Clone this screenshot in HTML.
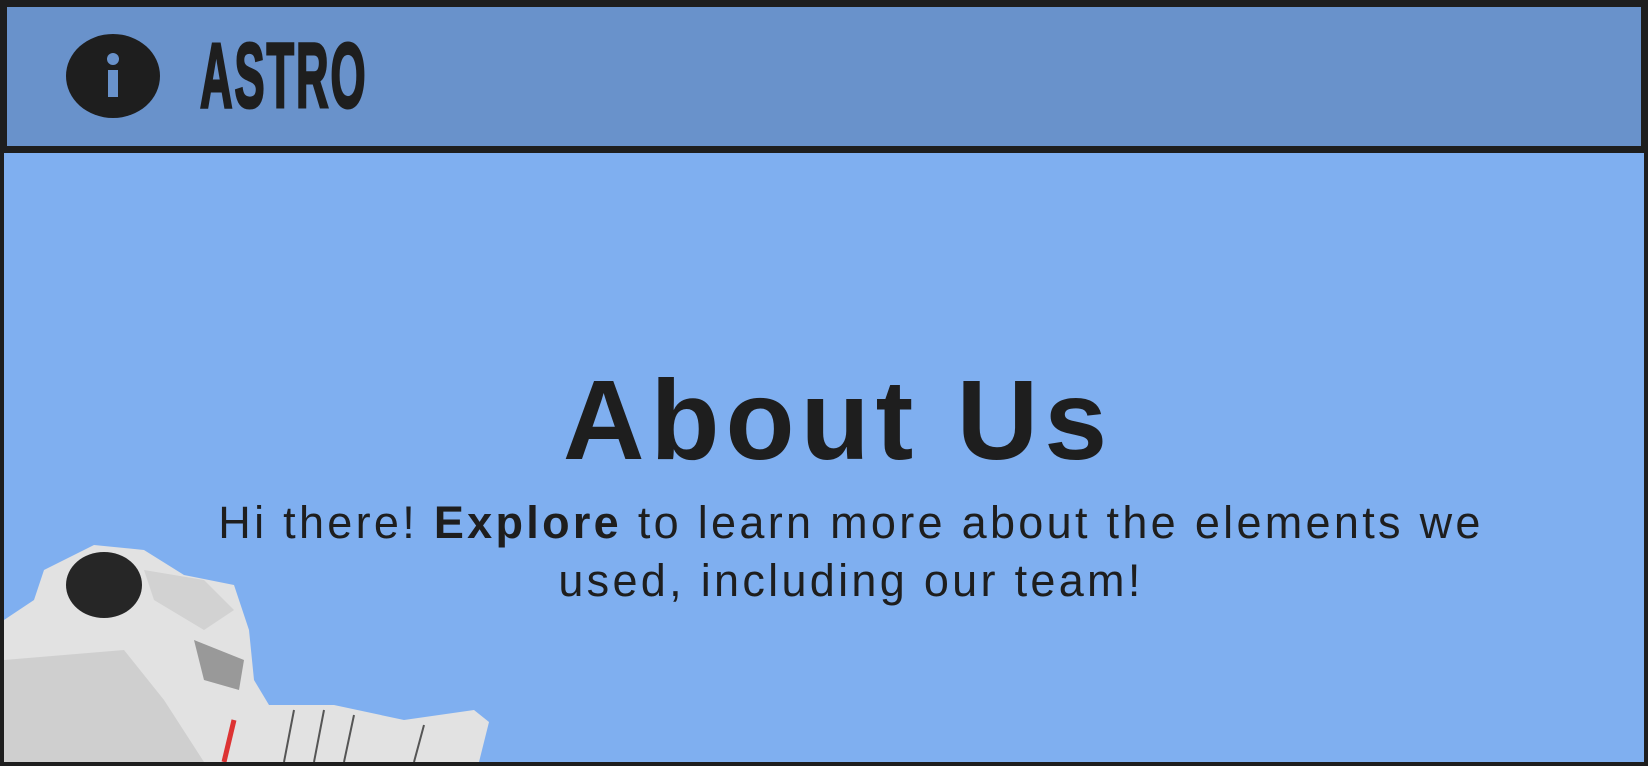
<!DOCTYPE html>
<html><head><meta charset="utf-8"><style>
*{margin:0;padding:0;box-sizing:border-box}
body{width:1648px;height:766px;background:#1e1e1e;position:relative;overflow:hidden;font-family:"Liberation Sans",sans-serif;color:#1e1e1e}
.hdr{position:absolute;left:7px;top:7px;width:1634px;height:139px;background:#6992cb}
.main{position:absolute;left:4px;top:153px;width:1640px;height:609px;background:#7faff0}
.logo{position:absolute;left:200px;top:30px;font-size:92px;font-weight:bold;transform:scaleX(0.49);transform-origin:0 0;line-height:1;letter-spacing:4px;-webkit-text-stroke:3px #1e1e1e}
h1{position:absolute;left:14px;width:1648px;top:364px;text-align:center;font-size:113px;font-weight:bold;letter-spacing:6px;line-height:1}
p{position:absolute;left:27px;width:1648px;top:494px;text-align:center;font-size:45px;line-height:58px;letter-spacing:3.3px}
</style></head><body>
<div class="hdr"></div>
<div class="main"></div>
<svg style="position:absolute;left:0;top:0" width="200" height="160">
<ellipse cx="113" cy="76" rx="47" ry="42" fill="#1e1e1e"/>
<circle cx="113" cy="59" r="6" fill="#6992cb"/>
<rect x="108" y="70" width="10" height="27" fill="#6992cb"/>
</svg>
<div class="logo">ASTRO</div>
<h1>About Us</h1>
<p>Hi there! <b>Explore</b> to learn more about the elements we<br>used, including our team!</p>
<svg style="position:absolute;left:4px;top:540px" width="490" height="222">
<path d="M0 80 L30 60 L40 30 L90 5 L140 10 L180 35 L230 45 L245 90 L250 140 L265 165 L330 165 L400 180 L470 170 L485 182 L475 222 L0 222 Z" fill="#e2e2e2"/>
<ellipse cx="100" cy="45" rx="38" ry="33" fill="#262626"/>
<path d="M140 30 L200 40 L230 70 L200 90 L150 60Z" fill="#d2d2d2"/>
<path d="M0 120 L120 110 L160 160 L200 222 L0 222Z" fill="#cfcfcf"/>
<path d="M230 180 L220 222" stroke="#d33" stroke-width="5"/>
<path d="M290 170 L280 222 M320 170 L310 222 M350 175 L340 222 M420 185 L410 222" stroke="#555" stroke-width="2"/>
<path d="M190 100 L240 120 L235 150 L200 140Z" fill="#999"/>
</svg>
</body></html>
